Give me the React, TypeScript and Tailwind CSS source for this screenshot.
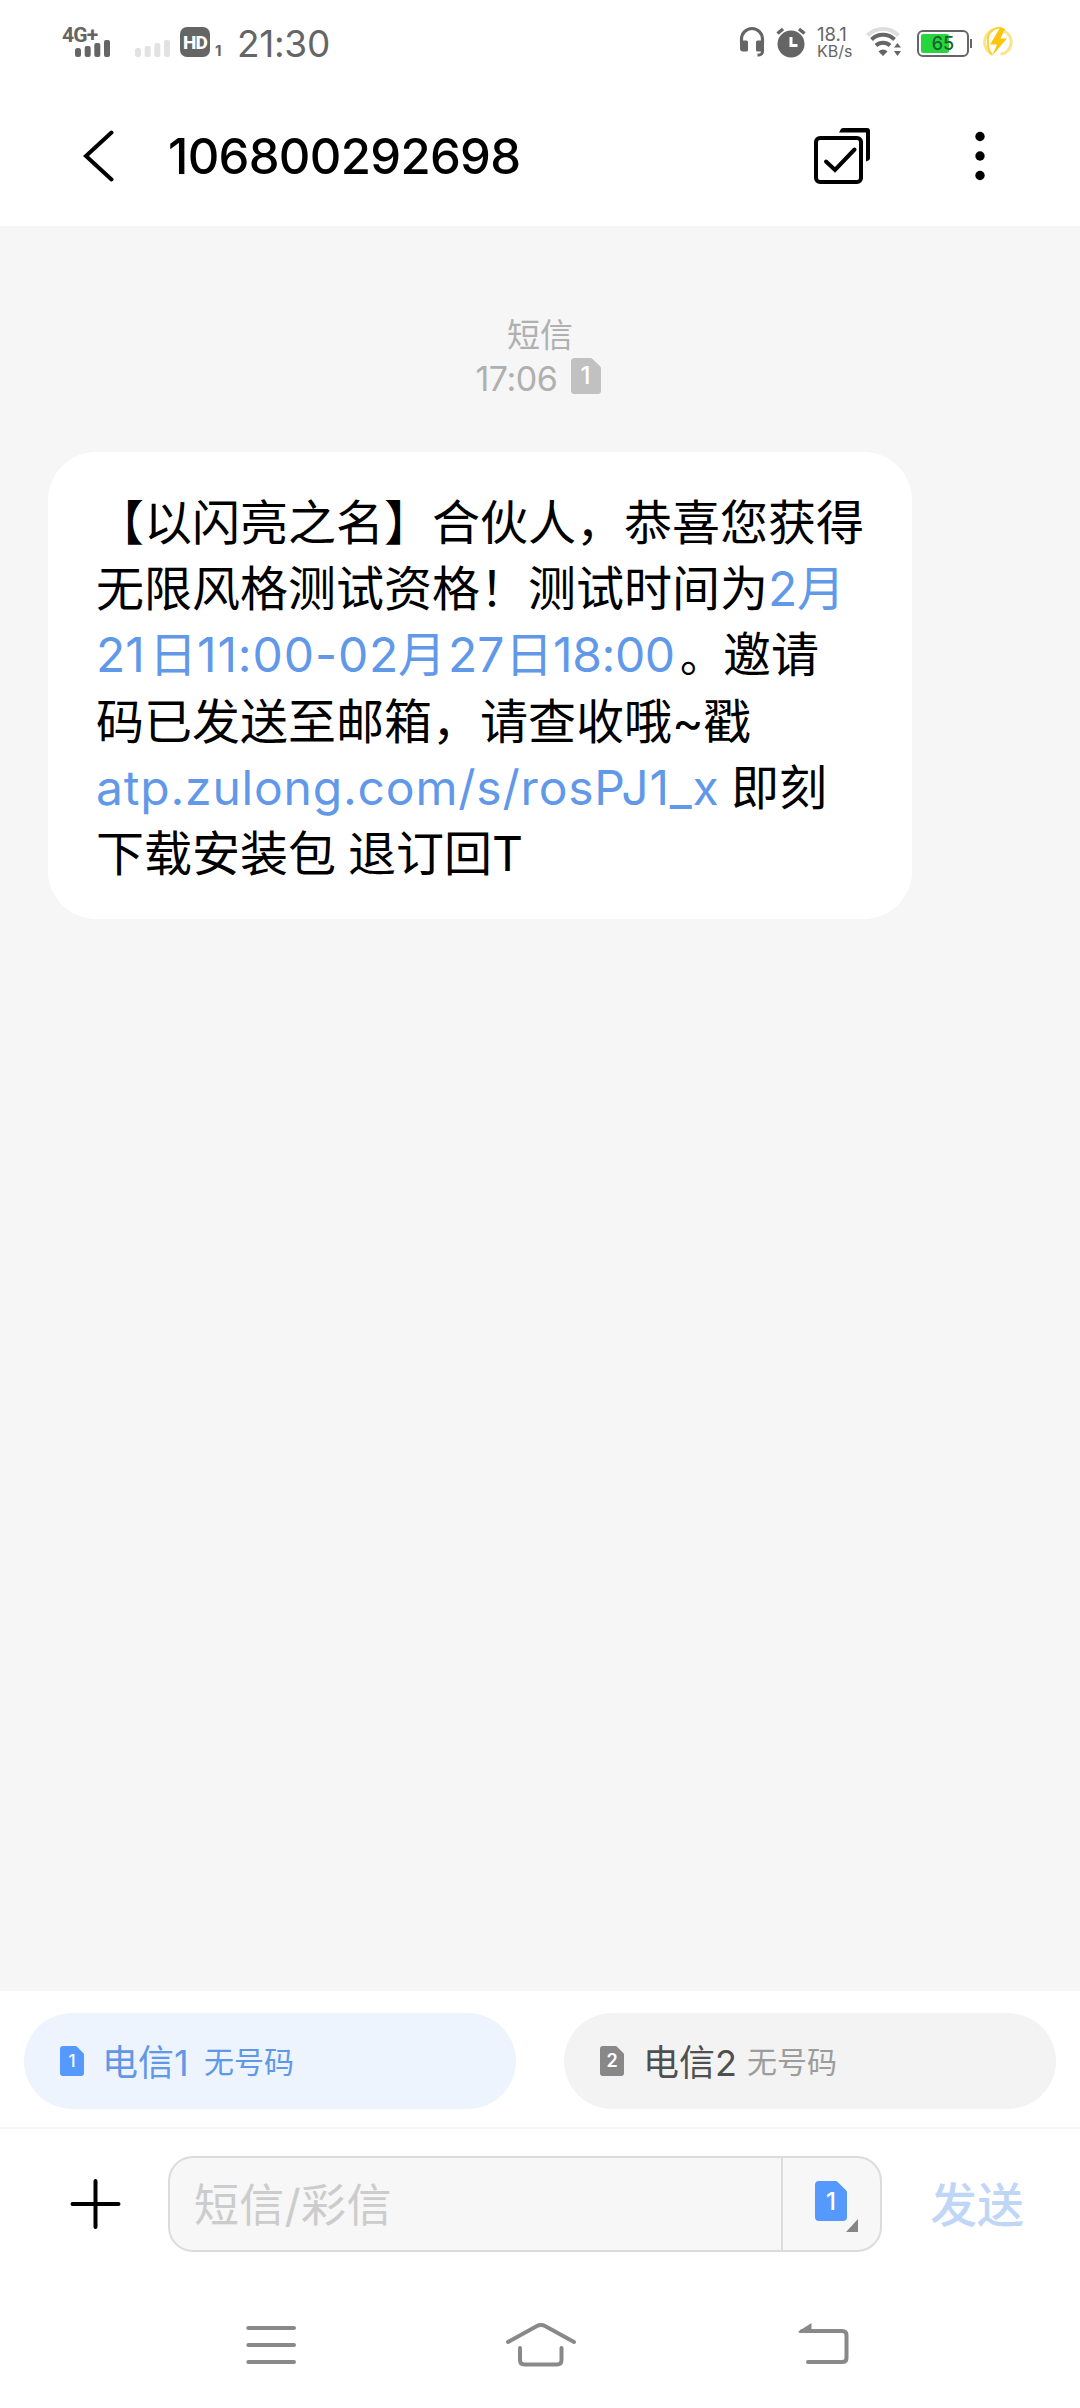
import React from "react";

function SimIcon({ className, label, labelClass }: { className: string; label: string; labelClass: string }) {
  return (
    <span className={`relative flex shrink-0 items-center justify-center ${className}`}>
      <svg className="absolute inset-0 h-full w-full" viewBox="0 0 32 40" preserveAspectRatio="none" fill="currentColor">
        <path d="M4 0H20.500a3 3 0 0 1 2.200.9L31 9.200a3 3 0 0 1 1 2.200V36a4 4 0 0 1-4 4H4A4 4 0 0 1 0 36V4A4 4 0 0 1 4 0Z" />
      </svg>
      <span className={`relative leading-none ${labelClass}`}>{label}</span>
    </span>
  );
}

function SignalBars({ className }: { className: string }) {
  return (
    <svg className={className} width="36" height="17" viewBox="0 0 36 17" fill="currentColor">
      <rect x="0" y="8" width="6" height="9" rx="2.500" />
      <rect x="9.700" y="6" width="6" height="11" rx="2" />
      <rect x="19.300" y="3" width="6" height="14" rx="2" />
      <rect x="29" y="0" width="6" height="17" rx="2" />
    </svg>
  );
}

function StatusBar() {
  return (
    <header className="flex h-[86px] items-start pt-[25px] text-[#656565]">
      <div className="ml-[62px] flex h-[33px] w-[50px] flex-col">
        <span className="h-[15px] font-['Roboto'] text-[21px] leading-[20px] font-bold tracking-[-0.8px]">4G+</span>
        <SignalBars className="ml-[13px]" />
      </div>
      <SignalBars className="mt-[15px] ml-[23px] text-[#e2e2e2]" />
      <div className="mt-[2px] ml-[9px] flex h-[30px] w-[30px] items-center justify-center rounded-[7px] bg-[#656565]">
        <span className="font-['Roboto'] text-[19px] leading-none font-extrabold tracking-[-0.8px] text-white">HD</span>
      </div>
      <span className="mt-[17px] ml-[5px] w-[10px] text-[15px] leading-[17px] font-bold">1</span>
      <span className="ml-[12px] w-[100px] text-[37px] leading-[38px] tracking-[-0.3px]">21:30</span>

      <svg className="ml-[402px] shrink-0" width="26" height="32" viewBox="0 0 26 32" fill="none">
        <path d="M2.500 18V14a10.500 10.500 0 0 1 21 0v4" stroke="currentColor" strokeWidth="3.200" />
        <path d="M1 15.500h6.500a1.500 1.500 0 0 1 1.500 1.500v8a1.500 1.500 0 0 1-1.500 1.500H4a3 3 0 0 1-3-3ZM25 15.500h-6.500a1.500 1.500 0 0 0-1.500 1.500v8a1.500 1.500 0 0 0 1.500 1.500H25Z" fill="currentColor" />
        <path d="M23.500 25v1.500a3.500 3.500 0 0 1-3.500 3.500h-1.500" stroke="currentColor" strokeWidth="3" />
      </svg>
      <svg className="ml-[11px] shrink-0" width="30" height="33" viewBox="0 0 30 33">
        <circle cx="15" cy="19" r="13.500" fill="currentColor" />
        <path d="M1.500 8.500 7 4M28.500 8.500 23 4" stroke="currentColor" strokeWidth="3.400" />
        <path d="M15 12v8.500h6.500" stroke="#fff" strokeWidth="3" fill="none" />
      </svg>
      <div className="ml-[11px] flex w-[40px] flex-col whitespace-nowrap">
        <span className="text-[18.500px] leading-[18px]">18.1</span>
        <span className="text-[16px] leading-[16px]">KB/s</span>
      </div>
      <svg className="ml-[9px] shrink-0" width="37" height="33" viewBox="0 0 37 33" fill="none">
        <path d="M1.500 10.500a21.500 21.500 0 0 1 31 0" stroke="#dedede" strokeWidth="4" />
        <path d="M5.500 14.500a16.500 16.500 0 0 1 23 0M10 20.500a10.500 10.500 0 0 1 14 0" stroke="currentColor" strokeWidth="4" />
        <path d="M12.500 26.500a6 6 0 0 1 9 0L17 31ZM28 22.500h7L31.500 18ZM28 26h7l-3.500 5Z" fill="currentColor" />
      </svg>
      <div className="mt-[5px] ml-[14px] flex items-center">
        <div className="relative flex h-[27px] w-[52px] items-center justify-center rounded-[6px] border-2 border-[#656565]">
          <div className="absolute top-[2px] left-[2px] h-[19px] w-[28px] rounded-[2px] bg-[#27d63f]" />
          <span className="relative text-[18px] leading-none font-medium text-[#17642a]">65</span>
        </div>
        <div className="ml-px h-[9px] w-[2px] bg-[#656565]" />
      </div>
      <svg className="ml-[10px] shrink-0" width="32" height="33" viewBox="0 0 32 33" fill="none">
        <path d="M12 4.500C4 7 0.500 16 4 23c1 2.500 3 4.500 6 6M22 6c8 4 9.500 14 3.500 20-2 2-4.500 3-7 3" stroke="#fbe48d" strokeWidth="3" />
        <path d="M18.500 2.500C10 3 5 9 6 16c.5 4-2 6 4 14" stroke="#fbd23c" strokeWidth="2" />
        <path d="M18.500 2 8 19.500h7L10 31 25 13.500h-6.500L23 4Z" fill="#fcc60e" />
      </svg>
    </header>
  );
}

function TitleBar() {
  return (
    <div className="flex h-[140px] items-center">
      <svg className="ml-[83px]" width="31" height="52" viewBox="0 0 31 52" fill="none">
        <path d="M28.500 2.500 3 26l25.500 23.500" stroke="#000" strokeWidth="4" strokeLinecap="round" />
      </svg>
      <h1 className="mt-[2px] ml-[54px] w-[401px] text-[49px] leading-[60px] font-medium tracking-[-0.7px] text-black">106800292698</h1>
      <svg className="ml-[243px]" width="58" height="58" viewBox="0 0 58 58" fill="none" stroke="#000">
        <rect x="4" y="11" width="45" height="44" rx="4" strokeWidth="4" />
        <path d="M14 34.500 23 43 42.500 22.500" strokeWidth="4" strokeLinecap="round" />
        <path d="M27 5.800C28.500 2 29.500 1 31 1H55a3 3 0 0 1 3 3V31c0 2-1.500 2.500-4 3.500V5.500H27Z" fill="#000" stroke="none" />
      </svg>
      <svg className="ml-[105px]" width="10" height="50" viewBox="0 0 10 50">
        <circle cx="5" cy="5.500" r="4.700" />
        <circle cx="5" cy="25" r="4.700" />
        <circle cx="5" cy="44.500" r="4.700" />
      </svg>
    </div>
  );
}

function Link({ className = "", children }: { className?: string; children: React.ReactNode }) {
  return <span className={`inline-block text-[#6199e8] ${className}`}>{children}</span>;
}

function Message() {
  return (
    <article className="ml-[48px] h-[467px] w-[864px] rounded-[48px] bg-white pt-[38px] pl-[48px] text-[48px] leading-[66px] whitespace-nowrap text-black">
      <p>【以闪亮之名】合伙人，恭喜您获得</p>
      <p>
        无限风格测试资格！测试时间为<Link className="w-[29px]">2</Link>
        <Link>月</Link>
      </p>
      <p>
        <Link className="w-[53px]">21</Link>
        <Link>日</Link>
        <Link className="w-[201px] tracking-[0.9px]">11:00-02</Link>
        <Link>月</Link>
        <Link className="w-[59px] pl-[2px]">27</Link>
        <Link>日</Link>
        <Link className="w-[122px] tracking-[-0.4px]">18:00</Link>
        <span className="ml-[5px] inline-block w-[43px] text-[43px]">。</span>邀请
      </p>
      <p>
        码已发送至邮箱，请查收哦<span className="inline-block w-[31px]">~</span>戳
      </p>
      <p>
        <Link className="w-[635px] tracking-[0.8px]">atp.zulong.com/s/rosPJ1_x</Link>即刻
      </p>
      <p>
        下载安装包<span className="inline-block w-[12px]" />退订回T
      </p>
    </article>
  );
}

function SimPicker() {
  return (
    <div className="flex h-[138px] gap-[48px] border-b-2 border-[#f6f6f6] px-[24px] pt-[22px]">
      <button className="flex h-[96px] flex-1 items-center rounded-full bg-[#edf4fe] pl-[36px] text-[#6097e6]">
        <SimIcon className="h-[30px] w-[24px] text-[#5599fc]" label="1" labelClass="text-[17px] font-medium text-white" />
        <span className="mt-[3px] ml-[18px] w-[102px] text-left text-[36px] leading-[50px]">电信1</span>
        <span className="mt-[2px] text-[30px] leading-[50px]">无号码</span>
      </button>
      <button className="flex h-[96px] flex-1 items-center rounded-full bg-[#f3f3f3] pl-[36px] text-[#9c9c9c]">
        <SimIcon className="h-[30px] w-[24px] text-[#888888]" label="2" labelClass="text-[18px] font-semibold text-white" />
        <span className="mt-[3px] ml-[19px] w-[104px] text-left text-[36px] leading-[50px] text-[#4f4f4f]">电信2</span>
        <span className="mt-[2px] text-[30px] leading-[50px]">无号码</span>
      </button>
    </div>
  );
}

function Composer() {
  return (
    <div className="flex h-[150px] items-center">
      <svg className="ml-[70px]" width="52" height="52" viewBox="0 0 52 52" stroke="#000" strokeWidth="4" strokeLinecap="round">
        <path d="M25.500 3v46M2.500 26h46" />
      </svg>
      <div className="ml-[46px] flex h-[96px] w-[714px] rounded-[25px] border-2 border-[#dcdcdc] bg-[#f7f7f7]">
        <div className="w-[611px] pl-[24px] text-[45px] leading-[96px] tracking-[0.3px] text-[#cccccc]">短信/彩信</div>
        <div className="relative flex-1 border-l-2 border-[#dcdcdc] pt-[23px] pl-[32px]">
          <SimIcon className="h-[40px] w-[32px] text-[#5599fc]" label="1" labelClass="mt-[2px] text-[24px] font-medium text-white" />
          <svg className="absolute top-[61px] left-[63px]" width="12" height="13" viewBox="0 0 12 13">
            <path d="M12 0v13H0Z" fill="#858585" />
          </svg>
        </div>
      </div>
      <button className="mt-[2px] ml-[48px] text-[47px] leading-[60px] font-medium text-[#bfd6f7]">发送</button>
    </div>
  );
}

function NavBar() {
  return (
    <nav className="flex h-[129px] items-start pt-[36px] text-[#898989]">
      <svg className="ml-[246px]" width="51" height="62" viewBox="0 0 51 62" fill="none" stroke="currentColor" strokeWidth="4" strokeLinecap="round">
        <path d="M2.300 13h45.700M2.300 30h45.700M2.300 47h45.700" />
      </svg>
      <svg className="ml-[208px]" width="72" height="62" viewBox="0 0 72 62" fill="none" stroke="currentColor" strokeWidth="4" strokeLinecap="round">
        <path d="M3 27 31.500 11.200Q36 9 40.500 11.200L69 27" />
        <path d="M15 33v12c0 2.800 1.500 4.500 4.500 4.500h32.500c3 0 4.500-1.700 4.500-4.500V33" />
      </svg>
      <svg className="ml-[221px]" width="52" height="62" viewBox="0 0 52 62" fill="none" stroke="currentColor" strokeLinecap="round">
        <path d="M4 16h40c3 0 4.500 1.500 4.500 4v23c0 2.500-1.500 4-4.500 4H10" strokeWidth="4" />
        <path d="M1 16 13.500 8V18H2Q-.5 17.500 1 16Z" fill="currentColor" stroke="none" />
      </svg>
    </nav>
  );
}

export default function App() {
  return (
    <div className="flex h-[2408px] w-[1080px] flex-col bg-white font-['Inter','Noto_Sans_CJK_SC',sans-serif]">
      <StatusBar />
      <TitleBar />
      <main className="flex-1 bg-[#f6f6f6]">
        <div className="flex h-[226px] flex-col items-center pt-[86px] text-[#b0b0b0]">
          <span className="text-[33px] leading-[46px]">短信</span>
          <div className="-mt-[2px] flex h-[42px] items-center pr-[4px]">
            <span className="mt-[3px] w-[95px] text-[34px] leading-[42px] tracking-[-0.5px]">17:06</span>
            <SimIcon className="-mt-[2px] h-[36px] w-[30px] text-[#c1c1c1]" label="1" labelClass="text-[24px] font-medium text-white" />
          </div>
        </div>
        <Message />
      </main>
      <SimPicker />
      <Composer />
      <NavBar />
    </div>
  );
}
